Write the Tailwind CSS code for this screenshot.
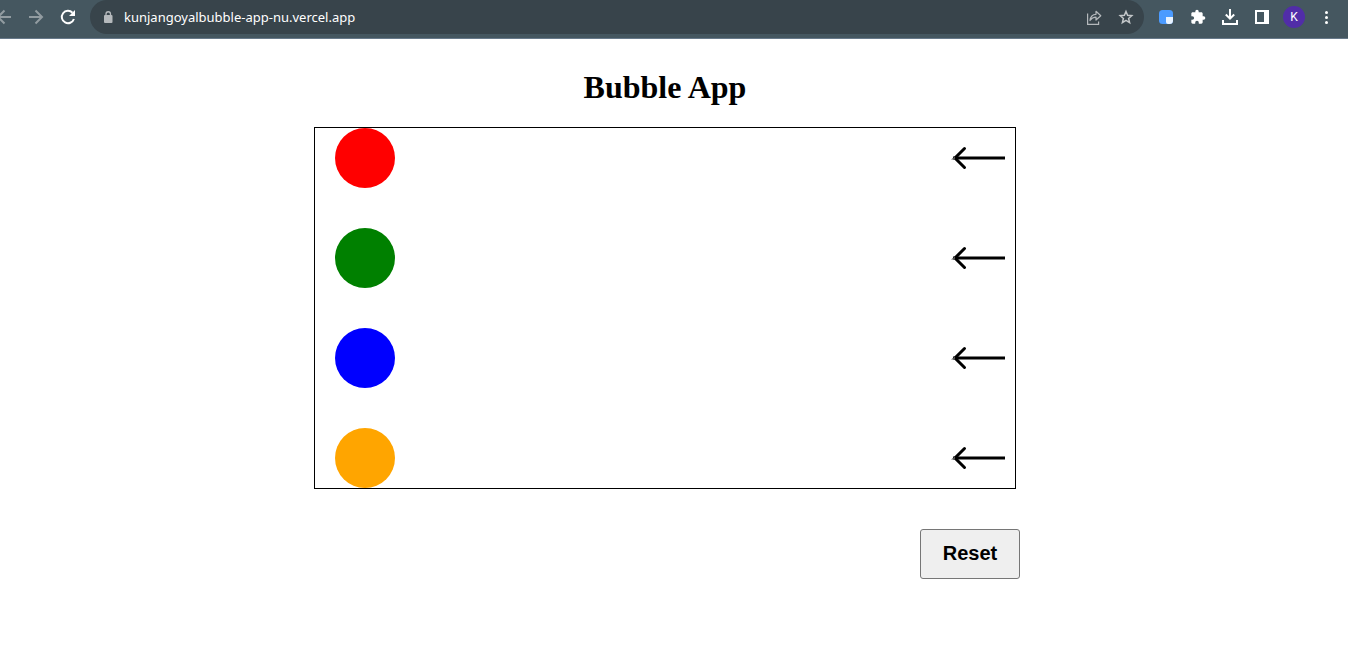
<!DOCTYPE html>
<html lang="en">
<head>
<meta charset="utf-8">
<meta name="viewport" content="width=device-width, initial-scale=1">
<title>Bubble App</title>
<script src="https://cdn.jsdelivr.net/npm/@tailwindcss/browser@4"></script>
</head>
<body class="min-h-screen overflow-x-hidden bg-white text-black">
<header class="flex h-[39px] items-start overflow-hidden border-b border-[#67798a] bg-[#455760] pr-1.5 text-white">
  <nav class="-ml-3 flex h-[34px] shrink-0 items-center text-[#929ca1]" aria-label="History">
    <button class="flex w-8 justify-center" aria-label="Back"><svg class="size-5" viewBox="0 0 20 20" fill="none" stroke="currentColor" stroke-width="2"><path d="M17 10H4M10.500 3.500L4 10l6.500 6.500"/></svg></button>
    <button class="flex w-8 justify-center" aria-label="Forward"><svg class="size-5" viewBox="0 0 20 20" fill="none" stroke="currentColor" stroke-width="2"><path d="M3 10h13M9.500 3.500L16 10l-6.500 6.500"/></svg></button>
    <button class="flex w-8 justify-center text-white" aria-label="Reload"><svg class="size-5" viewBox="0 0 20 20" fill="none" stroke="currentColor" stroke-width="2"><path d="M15.900 12A6.200 6.200 0 1 1 14.500 5.700"/><path d="M17 3v6h-6z" fill="currentColor" stroke="none"/></svg></button>
  </nav>
  <div class="mx-1.5 flex h-[34px] min-w-0 flex-1 items-center rounded-full bg-[#38444b] pr-0.5 pl-3">
    <svg class="mr-2.5 h-3 w-3 shrink-0 text-[#b5b9bc]" viewBox="0 0 12 12" aria-hidden="true"><rect x="2" y="4" width="8.500" height="8" rx="1" fill="currentColor"/><path d="M4 4.500V3a2.250 2.250 0 0 1 4.500 0v1.500" fill="none" stroke="currentColor" stroke-width="1.300"/></svg>
    <input class="min-w-0 flex-1 bg-transparent p-0 font-['Noto_Sans','Open_Sans',sans-serif] text-[13px] leading-5 text-white outline-none" type="text" aria-label="Address" value="kunjangoyalbubble-app-nu.vercel.app">
    <button class="flex w-8 justify-center text-[#b5b9bc]" aria-label="Share"><svg class="size-4" viewBox="0 0 16 16" fill="none" stroke="currentColor" stroke-width="1.200"><path d="M1.600 4.500v10.900h11v-2.900"/><path d="M4 11.500C4.500 7.500 6.500 5.300 10 5.300V2.300L14.800 6.700 10 11V8.200C7.300 8.200 5.500 9.300 4 11.500z" stroke-linejoin="round"/></svg></button>
    <button class="flex w-8 justify-center text-[#c3c7c9]" aria-label="Bookmark"><svg class="size-4" viewBox="0 0 16 16" fill="none" stroke="currentColor" stroke-width="1.500"><path d="M8 2.500l1.600 3.800 4.200.4-3.200 2.800 1 4.100L8 11.400l-3.600 2.200 1-4.100-3.200-2.800 4.200-.4z"/></svg></button>
  </div>
  <div class="flex h-[34px] shrink-0 items-center">
    <button class="flex w-8 justify-center" aria-label="Extension"><svg class="size-4" viewBox="0 0 16 16"><rect x="1" y="1" width="14" height="14" rx="3.500" fill="#4b9bff"/><path d="M8 8h7v3.500a3.500 3.500 0 0 1-3.500 3.500H10a2 2 0 0 1-2-2z" fill="#e9f3ff"/></svg></button>
    <button class="flex w-8 justify-center" aria-label="Extensions"><svg class="size-4" viewBox="0 0 24 24" fill="currentColor"><path d="M20.500 11H19V7c0-1.100-.9-2-2-2h-4V3.500a2.500 2.500 0 0 0-5 0V5H4c-1.100 0-2 .9-2 2v3.800h1.500a2.700 2.700 0 0 1 0 5.400H2V20c0 1.100.9 2 2 2h3.800v-1.500a2.700 2.700 0 0 1 5.400 0V22H17c1.100 0 2-.9 2-2v-4h1.500a2.500 2.500 0 0 0 0-5z"/></svg></button>
    <button class="flex w-8 justify-center" aria-label="Downloads"><svg class="size-4" viewBox="0 0 16 16" fill="none" stroke="currentColor" stroke-width="2"><path d="M8 0v9.500M3.800 5.500L8 9.700l4.200-4.200M1 11v4h14v-4"/></svg></button>
    <button class="flex w-8 justify-center" aria-label="Side panel"><svg class="size-3.5" viewBox="0 0 14 14"><path fill="currentColor" fill-rule="evenodd" d="M0 0h14v14H0zM2 2v10h7V2z"/></svg></button>
    <button class="flex w-8 justify-center" aria-label="Profile"><span class="flex size-[22px] items-center justify-center rounded-full bg-[#512da8] font-[Roboto,sans-serif] text-xs leading-none">K</span></button>
    <button class="flex w-8 justify-center" aria-label="Menu"><svg class="size-4" viewBox="0 0 16 16" fill="currentColor"><circle cx="8.500" cy="3.500" r="1.500"/><circle cx="8.500" cy="8.500" r="1.500"/><circle cx="8.500" cy="13.500" r="1.500"/></svg></button>
  </div>
</header>

<main class="flex flex-col items-center pt-7 pr-[18px] pb-10">
  <h1 class="font-['Liberation_Serif',serif] text-[32px] leading-10 font-bold">Bubble App</h1>
  <svg class="hidden" aria-hidden="true"><symbol id="arrow" viewBox="0 0 54 24"><path d="M2 12H54" fill="none" stroke="#000" stroke-width="3"/><path d="M13.500 2.500L4 12l9.500 9.500" fill="none" stroke="#000" stroke-width="3" stroke-linecap="round"/><path d="M0 13.500l4-3v3z" fill="#555"/></symbol></svg>
  <ul class="mt-5 flex w-full max-w-[702px] flex-col gap-10 border border-black pr-2.5 pl-5">
    <li class="flex items-center justify-between"><span class="size-[60px] rounded-full bg-[#ff0000]"></span><button aria-label="Move red bubble"><svg class="h-6 w-[54px]"><use href="#arrow"/></svg></button></li>
    <li class="flex items-center justify-between"><span class="size-[60px] rounded-full bg-[#008000]"></span><button aria-label="Move green bubble"><svg class="h-6 w-[54px]"><use href="#arrow"/></svg></button></li>
    <li class="flex items-center justify-between"><span class="size-[60px] rounded-full bg-[#0000ff]"></span><button aria-label="Move blue bubble"><svg class="h-6 w-[54px]"><use href="#arrow"/></svg></button></li>
    <li class="flex items-center justify-between"><span class="size-[60px] rounded-full bg-[#ffa500]"></span><button aria-label="Move orange bubble"><svg class="h-6 w-[54px]"><use href="#arrow"/></svg></button></li>
  </ul>
  <div class="mt-10 flex w-full max-w-[710px] justify-end">
    <button class="h-[50px] w-[100px] rounded-[3px] border border-[#767676] bg-[#efefef] pb-0.5 font-['Liberation_Sans',sans-serif] text-xl font-bold">Reset</button>
  </div>
</main>
</body>
</html>
